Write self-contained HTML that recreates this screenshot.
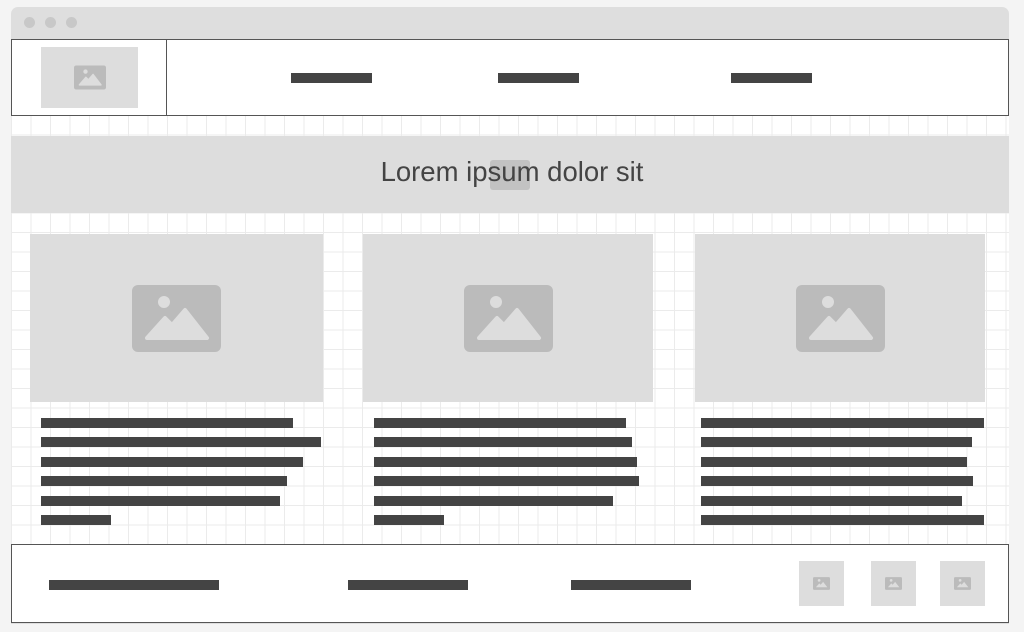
<!DOCTYPE html><html><head><meta charset="utf-8"><style>
*{margin:0;padding:0;box-sizing:border-box}
body{width:1024px;height:632px;background:#f4f4f4;position:relative;overflow:hidden;font-family:"Liberation Sans",sans-serif}
.a{position:absolute}
.win{left:11px;top:7px;width:998px;height:617px;background:#dedede;border-radius:7px 7px 0 0}
.dot{width:11px;height:11px;border-radius:50%;background:#c8c8c8;top:17px}
.grid{left:11px;top:115px;width:998px;height:430px;background-color:#fff;background-image:linear-gradient(90deg,#ebebeb 1px,transparent 1px),linear-gradient(#ebebeb 1px,transparent 1px);background-size:19.5px 19.5px;background-position:0 0}
.box{background:#fff;border:1px solid #555}
.bar{background:#444;height:10px}
.gr{background:#dddddd}
</style></head><body>
<div class="a win"></div>
<div class="a dot" style="left:24px"></div><div class="a dot" style="left:45px"></div><div class="a dot" style="left:66px"></div>
<div class="a grid"></div>
<div class="a box" style="left:11px;top:39px;width:998px;height:77px"></div>
<div class="a" style="left:166px;top:39px;width:1px;height:77px;background:#555"></div>
<div class="a gr" style="left:41px;top:47px;width:97px;height:61px"></div>
<svg class="a" style="left:74px;top:65px" width="32" height="25" viewBox="0 0 89 67"><rect width="89" height="67" rx="6" fill="#bbb"/><circle cx="32" cy="17" r="6" fill="#ddd"/><path d="M15 54 L33 33 L40 40 L53 25 L75 54 Z" fill="#ddd" stroke="#ddd" stroke-width="4" stroke-linejoin="round"/></svg>
<div class="a bar" style="left:291px;top:73px;width:81px"></div>
<div class="a bar" style="left:498px;top:73px;width:81px"></div>
<div class="a bar" style="left:731px;top:73px;width:81px"></div>
<div class="a gr" style="left:11px;top:136px;width:998px;height:77px"></div>
<div class="a" style="left:490px;top:160px;width:40px;height:30px;background:#c2c2c2;border-radius:3px"></div>
<div class="a" style="left:11px;top:156px;width:1002px;text-align:center;font-size:27.5px;color:#444">Lorem ipsum dolor sit</div>

<div class="a gr" style="left:30px;top:234px;width:293px;height:168px"></div>
<div class="a gr" style="left:363px;top:234px;width:290px;height:168px"></div>
<div class="a gr" style="left:695px;top:234px;width:290px;height:168px"></div>
<svg class="a" style="left:132px;top:285px" width="89" height="67" viewBox="0 0 89 67"><rect width="89" height="67" rx="6" fill="#bbb"/><circle cx="32" cy="17" r="6" fill="#ddd"/><path d="M15 53 L33 33 L40 40 L53 25 L75 53 Z" fill="#ddd" stroke="#ddd" stroke-width="4" stroke-linejoin="round"/></svg>
<svg class="a" style="left:464px;top:285px" width="89" height="67" viewBox="0 0 89 67"><rect width="89" height="67" rx="6" fill="#bbb"/><circle cx="32" cy="17" r="6" fill="#ddd"/><path d="M15 53 L33 33 L40 40 L53 25 L75 53 Z" fill="#ddd" stroke="#ddd" stroke-width="4" stroke-linejoin="round"/></svg>
<svg class="a" style="left:796px;top:285px" width="89" height="67" viewBox="0 0 89 67"><rect width="89" height="67" rx="6" fill="#bbb"/><circle cx="32" cy="17" r="6" fill="#ddd"/><path d="M15 53 L33 33 L40 40 L53 25 L75 53 Z" fill="#ddd" stroke="#ddd" stroke-width="4" stroke-linejoin="round"/></svg>

<div class="a bar" style="left:41px;top:418px;width:252px"></div>
<div class="a bar" style="left:41px;top:437px;width:280px"></div>
<div class="a bar" style="left:41px;top:457px;width:262px"></div>
<div class="a bar" style="left:41px;top:476px;width:246px"></div>
<div class="a bar" style="left:41px;top:496px;width:239px"></div>
<div class="a bar" style="left:41px;top:515px;width:70px"></div>

<div class="a bar" style="left:374px;top:418px;width:252px"></div>
<div class="a bar" style="left:374px;top:437px;width:258px"></div>
<div class="a bar" style="left:374px;top:457px;width:263px"></div>
<div class="a bar" style="left:374px;top:476px;width:265px"></div>
<div class="a bar" style="left:374px;top:496px;width:239px"></div>
<div class="a bar" style="left:374px;top:515px;width:70px"></div>

<div class="a bar" style="left:701px;top:418px;width:283px"></div>
<div class="a bar" style="left:701px;top:437px;width:271px"></div>
<div class="a bar" style="left:701px;top:457px;width:266px"></div>
<div class="a bar" style="left:701px;top:476px;width:272px"></div>
<div class="a bar" style="left:701px;top:496px;width:261px"></div>
<div class="a bar" style="left:701px;top:515px;width:283px"></div>

<div class="a box" style="left:11px;top:544px;width:998px;height:79px"></div>
<div class="a bar" style="left:49px;top:580px;width:170px"></div>
<div class="a bar" style="left:348px;top:580px;width:120px"></div>
<div class="a bar" style="left:571px;top:580px;width:120px"></div>
<div class="a gr" style="left:799px;top:561px;width:45px;height:45px"></div>
<div class="a gr" style="left:871px;top:561px;width:45px;height:45px"></div>
<div class="a gr" style="left:940px;top:561px;width:45px;height:45px"></div>
<svg class="a" style="left:813px;top:577px" width="17" height="13" viewBox="0 0 89 67"><rect width="89" height="67" rx="6" fill="#bbb"/><circle cx="32" cy="17" r="7" fill="#ddd"/><path d="M15 53 L33 33 L40 40 L53 25 L75 53 Z" fill="#ddd"/></svg>
<svg class="a" style="left:885px;top:577px" width="17" height="13" viewBox="0 0 89 67"><rect width="89" height="67" rx="6" fill="#bbb"/><circle cx="32" cy="17" r="7" fill="#ddd"/><path d="M15 53 L33 33 L40 40 L53 25 L75 53 Z" fill="#ddd"/></svg>
<svg class="a" style="left:954px;top:577px" width="17" height="13" viewBox="0 0 89 67"><rect width="89" height="67" rx="6" fill="#bbb"/><circle cx="32" cy="17" r="7" fill="#ddd"/><path d="M15 53 L33 33 L40 40 L53 25 L75 53 Z" fill="#ddd"/></svg>
</body></html>
